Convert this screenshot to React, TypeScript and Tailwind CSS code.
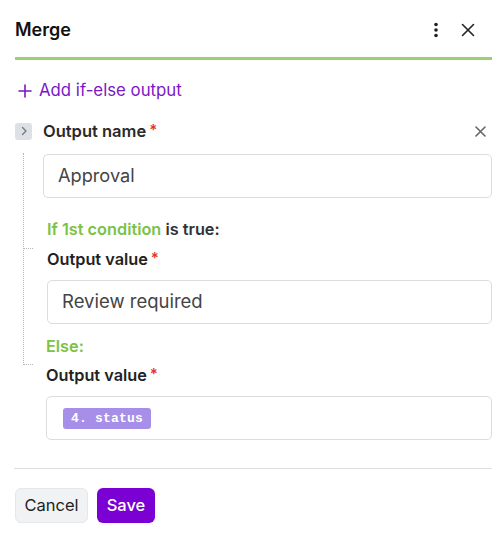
import React from "react";

const Star = () => <span className="text-[#e5322d] ml-[3px] text-[15px] relative top-[-2px]">*</span>;

export default function App() {
  return (
    <div className="w-[500px] h-[535px] bg-white font-['Inter',sans-serif] text-[#222] overflow-hidden">
      {/* header */}
      <div className="mx-[15px] h-[57px] flex items-center justify-between">
        <div className="text-[18px] font-semibold text-[#111] pt-[2px]">Merge</div>
        <div className="flex items-center gap-[22px] mr-[10px] pt-[2px]">
          <svg width="6" height="16" viewBox="0 0 6 16"><circle cx="3" cy="2.5" r="1.8" fill="#222"/><circle cx="3" cy="8" r="1.8" fill="#222"/><circle cx="3" cy="13.5" r="1.8" fill="#222"/></svg>
          <svg width="14" height="14" viewBox="0 0 14 14"><path d="M1.5 1.5 L12.5 12.5 M12.5 1.5 L1.5 12.5" stroke="#222" strokeWidth="1.6" strokeLinecap="round"/></svg>
        </div>
      </div>
      <div className="mx-[15px] mr-[8px] h-[3px] bg-[#9bd16f]" />

      {/* add */}
      <div className="ml-[18px] mt-[20px] flex items-center gap-[7px] text-[#7a17c9] text-[16.8px] h-[22px]">
        <svg width="14" height="14" viewBox="0 0 14 14"><path d="M7 1 V13 M1 7 H13" stroke="#7a17c9" strokeWidth="1.6" strokeLinecap="round"/></svg>
        <span>Add if-else output</span>
      </div>

      {/* output name row */}
      <div className="flex items-center mt-[20px] ml-[15px] mr-[14px] h-[18px]">
        <div className="w-[17px] h-[17px] rounded-[3px] bg-[#dde0e5] flex items-center justify-center">
          <svg width="8" height="10" viewBox="0 0 8 10"><path d="M2.5 1.5 L6 5 L2.5 8.5" stroke="#777" strokeWidth="1.3" fill="none" strokeLinecap="round" strokeLinejoin="round"/></svg>
        </div>
        <div className="ml-[11px] text-[16.5px] font-semibold text-[#2a2a2a]">Output name<Star /></div>
        <div className="ml-auto">
          <svg width="11" height="11" viewBox="0 0 11 11"><path d="M1 1 L10 10 M10 1 L1 10" stroke="#666" strokeWidth="1.6" strokeLinecap="round"/></svg>
        </div>
      </div>

      <div className="relative">
        {/* dotted tree lines */}
        <div className="absolute left-[23px] top-[-1px] h-[212px] border-l border-dotted border-[#b5b5b5]" />
        <div className="absolute left-[23px] top-[94px] w-[10px] border-t border-dotted border-[#b5b5b5]" />
        <div className="absolute left-[23px] top-[210px] w-[10px] border-t border-dotted border-[#b5b5b5]" />

        <div className="ml-[43px] mr-[8px] mt-[14px] h-[44px] border border-[#dcdcdc] rounded-[5px] flex items-center pl-[14px] text-[18.2px] text-[#444]">Approval</div>

        <div className="ml-[47px] mt-[20px] text-[16.3px] font-semibold text-[#333] h-[22px] leading-[22px]">
          <span className="text-[#7cc245]">If 1st condition</span> is true:
        </div>
        <div className="ml-[47px] mt-[8px] text-[16.3px] font-semibold text-[#222] h-[22px] leading-[22px]">Output value<Star /></div>
        <div className="ml-[47px] mr-[8px] mt-[10px] h-[44px] border border-[#dcdcdc] rounded-[5px] flex items-center pl-[14px] text-[18.5px] text-[#444]">Review required</div>

        <div className="ml-[46px] mt-[11px] text-[16.3px] font-semibold text-[#7cc245] h-[22px] leading-[22px]">Else:</div>
        <div className="ml-[46px] mt-[7px] text-[16.3px] font-semibold text-[#222] h-[22px] leading-[22px]">Output value<Star /></div>
        <div className="ml-[46px] mr-[8px] mt-[10px] h-[44px] border border-[#dcdcdc] rounded-[5px] flex items-center pl-[16px] pt-[1px]">
          <span className="bg-[#a68ee9] text-white rounded-[3px] px-[8px] h-[21px] leading-[21px] text-[13px] font-['Liberation_Mono',monospace] font-bold tracking-[0.2px]">4. status</span>
        </div>
      </div>

      <div className="mx-[14px] mr-[8px] mt-[28px] border-t border-[#dedede]" />

      <div className="flex gap-[9px] ml-[15px] mt-[19px]">
        <button className="w-[73px] h-[35px] rounded-[6px] bg-[#f1f2f4] border border-[#e6e7ea] text-[16.5px] text-[#222]">Cancel</button>
        <button className="w-[58px] h-[35px] rounded-[6px] bg-[#7a00d4] text-white text-[16.5px] font-medium">Save</button>
      </div>
    </div>
  );
}
